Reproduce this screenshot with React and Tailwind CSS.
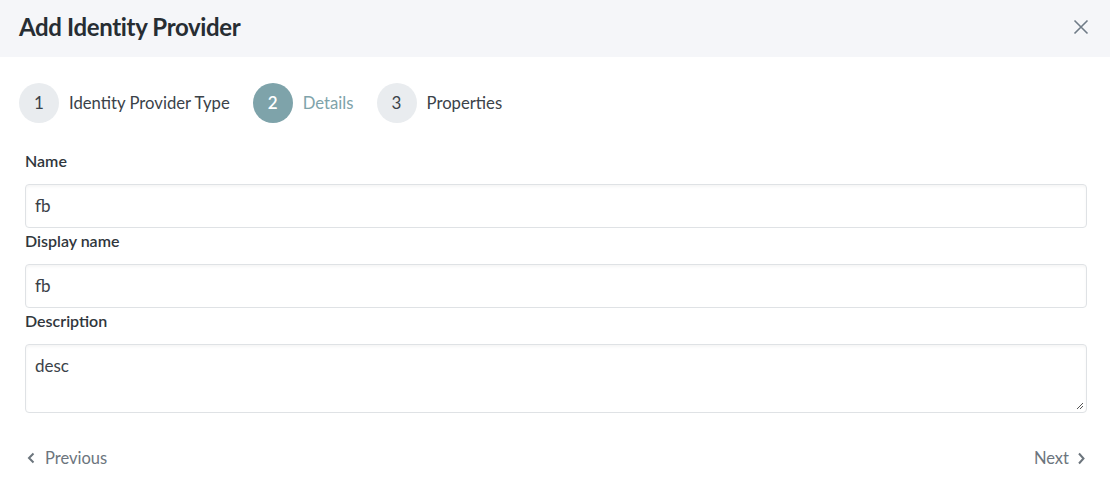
export default function App() {
  const steps = [
    { n: 1, label: "Identity Provider Type", active: false },
    { n: 2, label: "Details", active: true },
    { n: 3, label: "Properties", active: false },
  ];

  return (
    <div className="w-[1110px] h-[479px] bg-white text-[#3b4249] font-['Source_Sans_Pro','Lato',sans-serif]">
      <div className="h-[57px] bg-[#f5f6f9] flex items-center justify-between pl-[19px] pr-[21px] pb-[4px]">
        <h1 className="text-[24px] font-bold text-[#272d33] tracking-[-0.35px]">Add Identity Provider</h1>
        <svg width="16" height="16" viewBox="0 0 16 16" className="text-[#6f7b87] mt-[1px]">
          <path d="M1.5 1.5 L14.5 14.5 M14.5 1.5 L1.5 14.5" stroke="currentColor" strokeWidth="1.6" fill="none" />
        </svg>
      </div>

      <div className="pl-[25px] pr-[23px]">
        <div className="flex items-center gap-[23px] mt-[26px] -ml-[6px]">
          {steps.map((s) => (
            <div key={s.n} className="flex items-center gap-[10px]">
              <div
                className={
                  s.active
                    ? "w-[40px] h-[40px] rounded-full bg-[#7ea3aa] text-white flex items-center justify-center text-[17px] font-semibold"
                    : "w-[40px] h-[40px] rounded-full bg-[#e9ecef] text-[#3b4249] flex items-center justify-center text-[17px]"
                }
              >
                {s.n}
              </div>
              <span className={s.active ? "text-[16.7px] text-[#7ea3aa] pt-[1px]" : "text-[16.7px] text-[#3b4249] pt-[1px]"}>{s.label}</span>
            </div>
          ))}
        </div>

        <div className="mt-[26px]">
          <label className="block text-[16px] font-semibold leading-[24px] mb-[11px] text-[#30363c]">Name</label>
          <div className="h-[44px] border border-[#dfe2e5] rounded-[4px] shadow-[inset_0_2px_3px_rgba(0,0,0,0.04)] flex items-center px-[9px] text-[17px]">
            fb
          </div>

          <label className="block text-[16px] font-semibold leading-[24px] mt-[1px] mb-[11px] text-[#30363c]">Display name</label>
          <div className="h-[44px] border border-[#dfe2e5] rounded-[4px] shadow-[inset_0_2px_3px_rgba(0,0,0,0.04)] flex items-center px-[9px] text-[17px]">
            fb
          </div>

          <label className="block text-[16px] font-semibold leading-[24px] mt-[1px] mb-[11px] text-[#30363c]">Description</label>
          <div className="relative h-[69px] border border-[#dfe2e5] rounded-[4px] shadow-[inset_0_2px_3px_rgba(0,0,0,0.04)] px-[9px] pt-[9px] text-[17px] leading-[24px]">
            desc
            <svg width="8" height="8" viewBox="0 0 8 8" className="absolute right-[2px] bottom-[2px] text-[#555]">
              <path d="M7 1 L1 7 M7 4 L4 7" stroke="currentColor" strokeWidth="1" fill="none" />
            </svg>
          </div>
        </div>

        <div className="flex items-center justify-between mt-[33px] text-[16.5px] text-[#6c757d]">
          <div className="flex items-center gap-[10px] ml-[2px]">
            <svg width="8" height="12" viewBox="0 0 8 12">
              <path d="M6.5 1.5 L2 6 L6.5 10.5" stroke="currentColor" strokeWidth="2" fill="none" />
            </svg>
            Previous
          </div>
          <div className="flex items-center gap-[8px] mr-[1px]">
            Next
            <svg width="9" height="13" viewBox="0 0 9 13">
              <path d="M2 1.5 L6.5 6.5 L2 11.5" stroke="currentColor" strokeWidth="2" fill="none" />
            </svg>
          </div>
        </div>
      </div>
    </div>
  );
}
